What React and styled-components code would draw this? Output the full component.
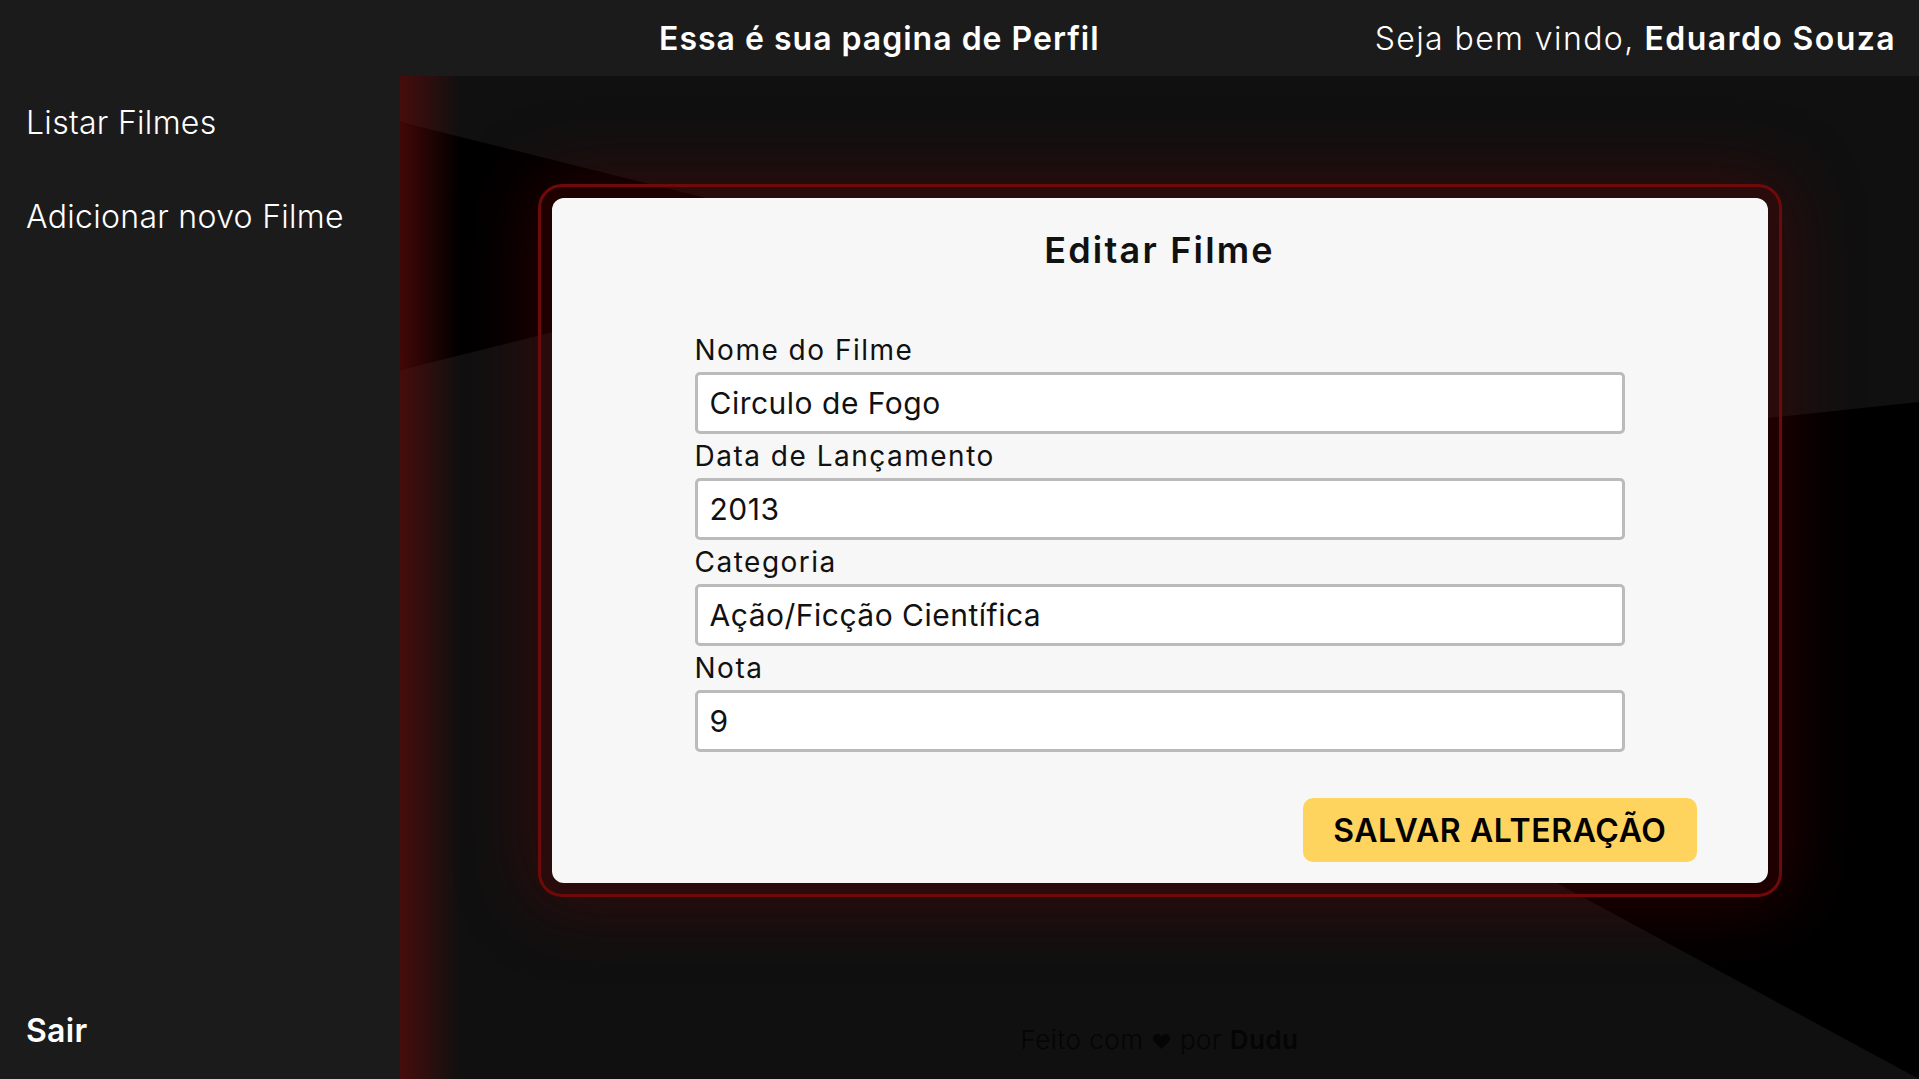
import styled, { createGlobalStyle } from "styled-components";

const GlobalStyle = createGlobalStyle`
  * {
    box-sizing: border-box;
  }
  body {
    margin: 0;
    background: #101010;
    font-family: "Inter", "Open Sans", sans-serif;
    color: #fff;
  }
`;

const Layout = styled.div`
  display: grid;
  grid-template-columns: 400px 1fr;
  grid-template-rows: 76px 1fr;
  width: 100vw;
  height: 100vh;
  overflow: hidden;
`;

const Header = styled.header`
  grid-column: 1 / 3;
  display: flex;
  align-items: center;
  justify-content: space-between;
  padding: 0 23px 0 659px;
  background-color: #1b1b1b;
  font-size: 32px;
`;

const PageTitle = styled.h1`
  margin: 0;
  font-size: 32px;
  font-weight: 600;
  letter-spacing: 1px;
`;

const Welcome = styled.p`
  margin: 0;
  font-weight: 300;
  letter-spacing: 1.4px;
`;

const Strong = styled.strong`
  font-weight: 600;
  margin-left: 10px;
`;

const Sidebar = styled.nav`
  display: flex;
  flex-direction: column;
  gap: 54px;
  padding: 27px 26px 28px;
  background-color: #1b1b1b;
`;

const NavLink = styled.a`
  font-size: 32px;
  line-height: 40px;
  font-weight: ${(props) => (props.$bold ? 600 : 300)};
  letter-spacing: 0.3px;
  color: #fff;
  text-decoration: none;
  cursor: pointer;
  &:last-child {
    margin-top: auto;
  }
`;

const Main = styled.main`
  position: relative;
  display: flex;
  flex-direction: column;
  align-items: center;
  padding-top: 108px;
  background: linear-gradient(to right, rgba(95, 10, 10, 0.7), rgba(16, 16, 16, 0) 60px), #101010;

  &::before,
  &::after {
    content: "";
    position: absolute;
    inset: 0;
    background: linear-gradient(to right, rgba(95, 10, 10, 0.7), rgba(0, 0, 0, 0) 60px), #000;
  }
  &::before {
    clip-path: polygon(0 46px, 499px 170px, 0 294px);
  }
  &::after {
    clip-path: polygon(100% 326px, 100% 100%, 473px 437px);
  }
`;

const Frame = styled.div`
  position: relative;
  z-index: 1;
  padding: 11px;
  border: 3px solid #6e0a0a;
  border-radius: 24px;
  background: rgba(100, 0, 0, 0.3);
  box-shadow: 0 0 70px 10px rgba(110, 0, 0, 0.35);
`;

const Card = styled.section`
  display: flex;
  flex-direction: column;
  width: 1216px;
  height: 685px;
  padding: 30px 71px 21px;
  border-radius: 12px;
  background: #f7f7f7;
  color: #111;
`;

const CardTitle = styled.h2`
  margin: 0;
  font-size: 36px;
  line-height: 44px;
  font-weight: 600;
  letter-spacing: 2.2px;
  text-align: center;
`;

const Form = styled.form`
  display: flex;
  flex-direction: column;
  width: 930px;
  margin: 56px auto 0;
`;

const Label = styled.label`
  display: block;
  font-size: 28px;
  line-height: 44px;
  font-weight: 400;
  letter-spacing: 1.5px;
  color: #111;
`;

const Input = styled.input`
  display: block;
  width: 100%;
  height: 62px;
  padding: 0 12px;
  border: 3px solid #bbb;
  border-radius: 5px;
  background: #fff;
  font-family: inherit;
  font-size: 30px;
  letter-spacing: 0.5px;
  color: #111;
  outline: none;
`;

const SaveButton = styled.button`
  align-self: flex-end;
  height: 64px;
  margin-top: 46px;
  padding: 0 30px;
  border: none;
  border-radius: 10px;
  background: #ffd45e;
  font-family: inherit;
  font-size: 32px;
  font-weight: 600;
  letter-spacing: 0.6px;
  color: #000;
  cursor: pointer;
`;

const Footer = styled.footer`
  position: relative;
  z-index: 1;
  margin-top: auto;
  padding-bottom: 19px;
  font-size: 26px;
  line-height: 36px;
  font-weight: 300;
  letter-spacing: 0.5px;
  color: #050505;
`;

const Heart = styled.span`
  font-size: 20px;
`;

const Author = styled.strong`
  font-weight: 600;
`;

const fields = [
  { id: "nome", label: "Nome do Filme", value: "Circulo de Fogo" },
  { id: "data", label: "Data de Lançamento", value: "2013" },
  { id: "categoria", label: "Categoria", value: "Ação/Ficção Científica" },
  { id: "nota", label: "Nota", value: "9" },
];

export default function App() {
  return (
    <>
      <GlobalStyle />
      <Layout>
        <Header>
          <PageTitle>Essa é sua pagina de Perfil</PageTitle>
          <Welcome>
            Seja bem vindo,<Strong>Eduardo Souza</Strong>
          </Welcome>
        </Header>
        <Sidebar>
          <NavLink>Listar Filmes</NavLink>
          <NavLink>Adicionar novo Filme</NavLink>
          <NavLink $bold>Sair</NavLink>
        </Sidebar>
        <Main>
          <Frame>
            <Card>
              <CardTitle>Editar Filme</CardTitle>
              <Form onSubmit={(e) => e.preventDefault()}>
                {fields.map((f) => (
                  <div key={f.id}>
                    <Label htmlFor={f.id}>{f.label}</Label>
                    <Input id={f.id} defaultValue={f.value} />
                  </div>
                ))}
              </Form>
              <SaveButton>SALVAR ALTERAÇÃO</SaveButton>
            </Card>
          </Frame>
          <Footer>
            Feito com <Heart>♥</Heart> por <Author>Dudu</Author>
          </Footer>
        </Main>
      </Layout>
    </>
  );
}
